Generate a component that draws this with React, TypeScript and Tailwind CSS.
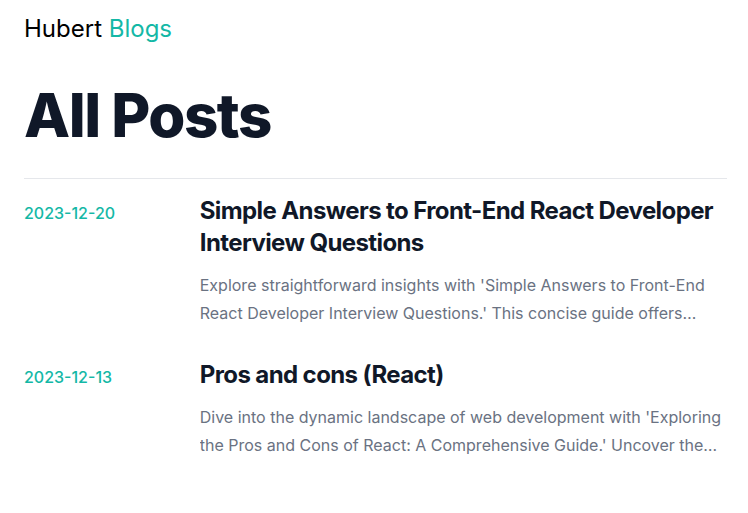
const posts = [
  {
    date: '2023-12-20',
    title: 'Simple Answers to Front-End React Developer Interview Questions',
    summary:
      "Explore straightforward insights with 'Simple Answers to Front-End React Developer Interview Questions.' This concise guide offers practical answers to common interview questions.",
  },
  {
    date: '2023-12-13',
    title: 'Pros and cons (React)',
    summary:
      "Dive into the dynamic landscape of web development with 'Exploring the Pros and Cons of React: A Comprehensive Guide.' Uncover the strengths and weaknesses of the library.",
  },
];

export default function App(): JSX.Element {
  return (
    <div className="min-h-screen bg-white font-['Inter',sans-serif]">
      <div className="ml-6 w-[703px]">
        <header className="pt-[13px]">
          <div className="text-2xl leading-8 text-black">
            Hubert <span className="text-[#14b8a6]">Blogs</span>
          </div>
        </header>

        <div className="pt-10 pb-[33px] border-b border-gray-200">
          <h1 className="text-6xl leading-[60px] font-extrabold tracking-tight text-gray-900">
            All Posts
          </h1>
        </div>

        <ul>
          {posts.map((post) => (
            <li key={post.date} className="py-4">
              <article className="grid grid-cols-4 items-baseline">
                <time dateTime={post.date} className="text-base font-medium leading-6 text-[#14b8a6]">
                  {post.date}
                </time>
                <div className="col-span-3">
                  <h2 className="text-2xl font-bold leading-8 tracking-tight text-gray-900">
                    {post.title}
                  </h2>
                  <p className="mt-3 text-base leading-7 text-gray-500 line-clamp-2">
                    {post.summary}
                  </p>
                </div>
              </article>
            </li>
          ))}
        </ul>
      </div>
    </div>
  );
}
